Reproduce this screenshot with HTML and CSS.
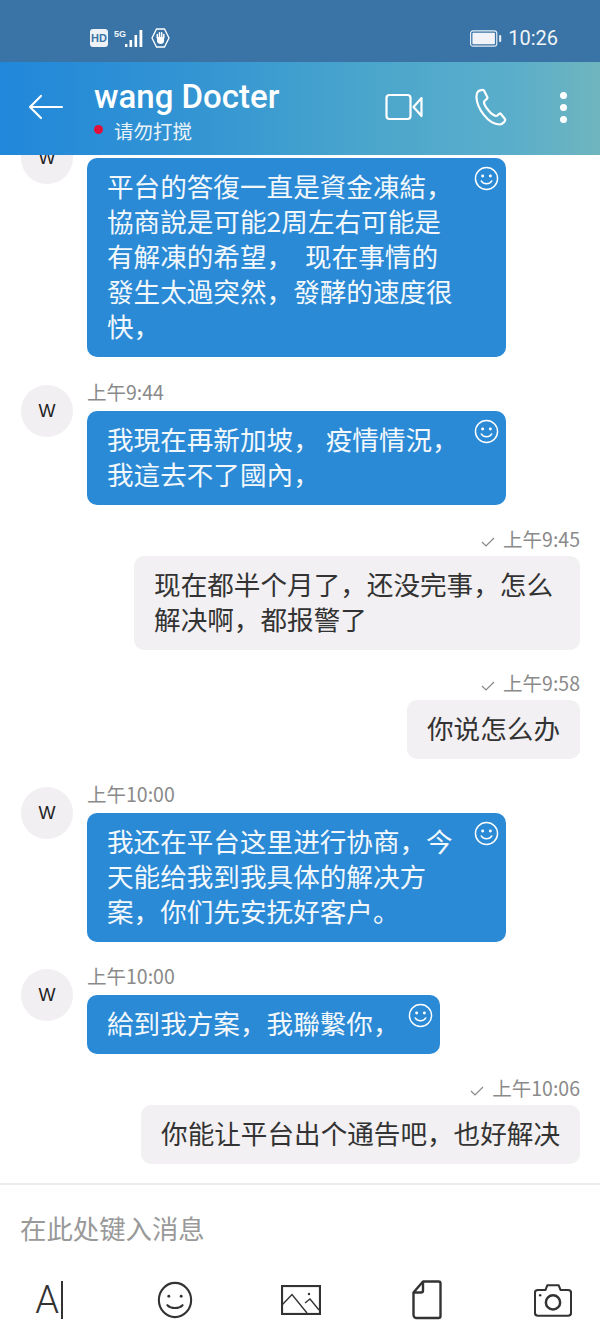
FILE: index.html
```html
<!DOCTYPE html>
<html lang="zh">
<head>
    <meta charset="UTF-8">
    <meta name="viewport" content="width=device-width, initial-scale=1.0">
    <title>wang Docter</title>
    <link rel="stylesheet" href="styles.css">
</head>
<body>
    <div class="container">
        <div class="status-bar">
            <div class="status-left">
                <span class="hd-badge">HD</span>
                <span class="signal">
                    <span class="signal-label">5G</span>
                    <svg width="19" height="19" viewBox="0 0 19 19" fill="#fff">
                        <rect x="0" y="15" width="2.400" height="3"></rect>
                        <rect x="4.500" y="11" width="2.600" height="7"></rect>
                        <rect x="9.500" y="6" width="2.600" height="12"></rect>
                        <rect x="14.500" y="1" width="2.800" height="17"></rect>
                    </svg>
                </span>
                <svg class="hand-icon" width="19" height="20" viewBox="0 0 19 20" fill="none" stroke="#fff" stroke-linecap="round">
                    <path d="M5.500 1h8L18 10l-4.500 9h-8L1 10z" stroke-width="1.300"></path>
                    <path d="M6.300 10V6.500M8.500 9.500V4.800M10.700 9.500V4.800M12.800 10V6.500" stroke-width="1.500"></path>
                    <path d="M6 9h7v4c0 1.800-1.400 3-3.300 3S6 14.800 6 13z" fill="#fff" stroke="none"></path>
                </svg>
            </div>
            <div class="status-right">
                <svg width="32" height="17" viewBox="0 0 33 17">
                    <rect x="0.600" y="0.600" width="27" height="15.800" rx="2.500" fill="none" stroke="#e6eef5" stroke-width="1.200"></rect>
                    <rect x="2.500" y="2.500" width="23.200" height="12" rx="1" fill="#f1f3f8"></rect>
                    <rect x="30" y="5" width="2.200" height="7" rx="1" fill="#e6eef5"></rect>
                </svg>
                <span class="clock">10:26</span>
            </div>
        </div>

        <div class="app-bar">
            <svg class="back-icon" width="36" height="26" viewBox="0 0 36 26" fill="none" stroke="#fff" stroke-width="2.200" stroke-linecap="round" stroke-linejoin="round">
                <path d="M2 13h32M13 2 2 13l11 11"></path>
            </svg>
            <div class="contact">
                <div class="contact-name">wang Docter</div>
                <div class="contact-status"><span class="red-dot"></span>请勿打搅</div>
            </div>
            <div class="app-actions">
                <svg width="38" height="28" viewBox="0 0 38 28" fill="none" stroke="#fff" stroke-width="2.200" stroke-linejoin="round">
                    <rect x="1.500" y="2" width="24" height="24" rx="3"></rect>
                    <path d="M36.500 5 28.500 14l8 9z"></path>
                </svg>
                <svg width="32" height="38" viewBox="0 0 32 38" fill="none" stroke="#fff" stroke-width="2.200" stroke-linejoin="round">
                    <path d="M3 3.500c2-1.500 5-2 6-1l3.500 7c.5 1.500-3.500 3-3.500 4.500 0 4 7.500 13.500 12 14 1.500.2 3-3 4.500-2.500l4.500 5.500c1 1.500-2 5.500-5.500 5.500C13 36.500 2 20 1.500 9.500 1.400 7 2 4.500 3 3.500z"></path>
                </svg>
                <div class="more-dots"><span></span><span></span><span></span></div>
            </div>
        </div>

        <div class="chat">
            <div class="msg msg-first">
                <div class="avatar">W</div>
                <div class="msg-body">
                    <div class="msg-time"></div>
                    <div class="bubble bubble-in bubble-wide">平台的答復一直是資金凍結&#xFF0C;<br>協商說是可能2周左右可能是<br>有解凍的希望&#xFF0C;&nbsp;&nbsp;现在事情的<br>發生太過突然&#xFF0C;發酵的速度很<br>快&#xFF0C;<svg class="bubble-smile" viewBox="0 0 26 26" fill="none" stroke="#fff" stroke-width="1.500" stroke-linecap="round"><circle cx="13" cy="13" r="11.500"></circle><circle cx="9" cy="10.500" r=".8" fill="#fff"></circle><circle cx="17" cy="10.500" r=".8" fill="#fff"></circle><path d="M7.500 15.500c2.500 4 8.500 4 11 0"></path></svg></div>
                </div>
            </div>

            <div class="msg msg-gap-a">
                <div class="avatar">W</div>
                <div class="msg-body">
                    <div class="msg-time">上午9:44</div>
                    <div class="bubble bubble-in bubble-wide">我現在再新加坡&#xFF0C;&nbsp;疫情情況&#xFF0C;<br>我這去不了國內&#xFF0C;<svg class="bubble-smile" viewBox="0 0 26 26" fill="none" stroke="#fff" stroke-width="1.500" stroke-linecap="round"><circle cx="13" cy="13" r="11.500"></circle><circle cx="9" cy="10.500" r=".8" fill="#fff"></circle><circle cx="17" cy="10.500" r=".8" fill="#fff"></circle><path d="M7.500 15.500c2.500 4 8.500 4 11 0"></path></svg></div>
                </div>
            </div>

            <div class="msg-out msg-gap-b">
                <div class="msg-time"><svg class="check" width="14" height="10" viewBox="0 0 14 10" fill="none" stroke="#888" stroke-width="1.200"><path d="M1 5l4 4 8-8"></path></svg>上午9:45</div>
                <div class="bubble bubble-out bubble-out-long">现在都半个月了&#xFF0C;还没完事&#xFF0C;怎么<br>解决啊&#xFF0C;都报警了</div>
            </div>

            <div class="msg-out msg-gap-c">
                <div class="msg-time"><svg class="check" width="14" height="10" viewBox="0 0 14 10" fill="none" stroke="#888" stroke-width="1.200"><path d="M1 5l4 4 8-8"></path></svg>上午9:58</div>
                <div class="bubble bubble-out">你说怎么办</div>
            </div>

            <div class="msg msg-gap-d">
                <div class="avatar">W</div>
                <div class="msg-body">
                    <div class="msg-time">上午10:00</div>
                    <div class="bubble bubble-in bubble-wide">我还在平台这里进行协商&#xFF0C;今<br>天能给我到我具体的解决方<br>案&#xFF0C;你们先安抚好客户。<svg class="bubble-smile" viewBox="0 0 26 26" fill="none" stroke="#fff" stroke-width="1.500" stroke-linecap="round"><circle cx="13" cy="13" r="11.500"></circle><circle cx="9" cy="10.500" r=".8" fill="#fff"></circle><circle cx="17" cy="10.500" r=".8" fill="#fff"></circle><path d="M7.500 15.500c2.500 4 8.500 4 11 0"></path></svg></div>
                </div>
            </div>

            <div class="msg msg-gap-e">
                <div class="avatar">W</div>
                <div class="msg-body">
                    <div class="msg-time">上午10:00</div>
                    <div class="bubble bubble-in bubble-short">給到我方案&#xFF0C;我聯繫你&#xFF0C;<svg class="bubble-smile" viewBox="0 0 26 26" fill="none" stroke="#fff" stroke-width="1.500" stroke-linecap="round"><circle cx="13" cy="13" r="11.500"></circle><circle cx="9" cy="10.500" r=".8" fill="#fff"></circle><circle cx="17" cy="10.500" r=".8" fill="#fff"></circle><path d="M7.500 15.500c2.500 4 8.500 4 11 0"></path></svg></div>
                </div>
            </div>

            <div class="msg-out msg-gap-f">
                <div class="msg-time"><svg class="check" width="14" height="10" viewBox="0 0 14 10" fill="none" stroke="#888" stroke-width="1.200"><path d="M1 5l4 4 8-8"></path></svg>上午10:06</div>
                <div class="bubble bubble-out">你能让平台出个通告吧&#xFF0C;也好解决</div>
            </div>
        </div>

        <div class="composer">
            <div class="composer-input">在此处键入消息</div>
            <div class="composer-tools">
                <div class="tool-text">A<span class="caret"></span></div>
                <svg width="38" height="40" viewBox="0 0 40 40" fill="none" stroke="#333" stroke-width="2.200" stroke-linecap="round">
                    <ellipse cx="20" cy="20" rx="17" ry="18"></ellipse>
                    <circle cx="13.500" cy="16" r="1.500" fill="#333" stroke="none"></circle>
                    <circle cx="26.500" cy="16" r="1.500" fill="#333" stroke="none"></circle>
                    <path d="M12 25.500c4 4 12 4 16 0"></path>
                </svg>
                <svg width="40" height="30" viewBox="0 0 40 30" fill="none" stroke="#333">
                    <rect x="1" y="1" width="38" height="28" stroke-width="2.200"></rect>
                    <path d="M1 20 11 9.500 26 28M24 18l5-4 9 11" stroke-width="1.400"></path>
                    <circle cx="28" cy="9" r="1.200" fill="#333" stroke="none"></circle>
                </svg>
                <svg width="30" height="40" viewBox="0 0 30 40" fill="none" stroke="#333" stroke-width="2.400" stroke-linejoin="round">
                    <path d="M11 1.500h15.500a2 2 0 0 1 2 2V36a2 2 0 0 1-2 2h-22a3 3 0 0 1-3-3V12.500z"></path>
                    <path d="M11 1.500v9a2 2 0 0 1-2 2H1.500"></path>
                </svg>
                <svg width="38" height="35" viewBox="0 0 40 36" fill="none" stroke="#333" stroke-width="2.200" stroke-linejoin="round">
                    <path d="M4 7h8l2-5h12l2 5h8a3 3 0 0 1 3 3v21a3 3 0 0 1-3 3H4a3 3 0 0 1-3-3V10a3 3 0 0 1 3-3z"></path>
                    <circle cx="20" cy="20" r="7.500" stroke-width="2.600"></circle>
                    <circle cx="6.500" cy="12.500" r="1.300" fill="#333" stroke="none"></circle>
                </svg>
            </div>
        </div>
    </div>
</body>
</html>
```

FILE: styles.css
```css
body, html {
    margin: 0;
    padding: 0;
    height: 100%;
    font-family: "Noto Sans CJK SC", "Noto Sans", sans-serif;
    overflow: hidden;
}
.container {
    display: flex;
    flex-direction: column;
    width: 600px;
    height: 1333px;
    background-color: #ffffff;
    overflow: hidden;
}

/* status bar */
.status-bar {
    flex: none;
    display: flex;
    align-items: center;
    justify-content: space-between;
    box-sizing: border-box;
    height: 62px;
    padding: 14px 42px 0 90px;
    background-color: #3a74a6;
    color: #f1f4f8;
}
.status-left, .status-right {
    display: flex;
    align-items: center;
}
.hd-badge {
    width: 18px;
    height: 18px;
    border-radius: 3px;
    background-color: #eef2f6;
    color: #3a74a6;
    font-family: "Liberation Sans", sans-serif;
    font-size: 11px;
    font-weight: bold;
    line-height: 18px;
    text-align: center;
}
.signal {
    display: flex;
    align-items: flex-end;
    margin-left: 6px;
    height: 19px;
}
.signal-label {
    align-self: flex-start;
    margin-right: -1px;
    font-family: "Liberation Sans", sans-serif;
    font-size: 9px;
    font-weight: bold;
    line-height: 10px;
}
.hand-icon {
    margin-left: 7px;
}
.clock {
    margin-left: 6px;
    font-family: Roboto, sans-serif;
    font-size: 20px;
    line-height: 24px;
}

/* app bar */
.app-bar {
    flex: none;
    display: flex;
    align-items: center;
    box-sizing: border-box;
    height: 93px;
    padding: 0 33px 0 28px;
    background: linear-gradient(90deg, #2187da 0%, #3596d2 35%, #4ba6cc 62%, #5aaecb 85%, #6fb5be 100%);
    color: #ffffff;
}
.back-icon {
    flex: none;
    margin-top: -4px;
}
.contact {
    flex: 1;
    margin-left: 30px;
    padding-top: 5px;
}
.contact-name {
    font-family: Roboto, sans-serif;
    font-size: 33px;
    font-weight: 500;
    line-height: 38px;
}
.contact-status {
    display: flex;
    align-items: center;
    margin-top: 1px;
    font-size: 19.500px;
    line-height: 28px;
    color: #e8f2f8;
}
.red-dot {
    width: 9px;
    height: 9px;
    margin: -3px 11px 0 0;
    border-radius: 50%;
    background-color: #e0103a;
}
.app-actions {
    display: flex;
    align-items: center;
    margin-top: -3px;
}
.app-actions svg + svg {
    margin-left: 52px;
}
.more-dots {
    display: flex;
    flex-direction: column;
    gap: 5px;
    margin-left: 53px;
}
.more-dots span {
    width: 7px;
    height: 7px;
    border-radius: 50%;
    background-color: #ffffff;
}

/* chat */
.chat {
    flex: 1;
    min-height: 0;
    overflow: hidden;
}
.msg {
    display: flex;
    align-items: flex-start;
    padding-left: 21px;
}
.msg-first {
    margin-top: -23px;
}
.msg-gap-a { margin-top: 28px; }
.msg-gap-b { margin-top: 21px; }
.msg-gap-c { margin-top: 20px; }
.msg-gap-d { margin-top: 28px; }
.msg-gap-e { margin-top: 27px; }
.msg-gap-f { margin-top: 21px; }
.avatar {
    flex: none;
    width: 52px;
    height: 52px;
    border-radius: 50%;
    background-color: #f1eff1;
    color: #222222;
    font-family: "Liberation Sans", sans-serif;
    font-size: 18px;
    line-height: 52px;
    text-align: center;
}
.msg-body {
    margin-left: 14px;
    margin-top: -6px;
}
.msg-body .msg-time {
    margin-bottom: 6px;
}
.msg-time {
    height: 26px;
    margin-bottom: 4px;
    font-size: 19.500px;
    line-height: 26px;
    color: #8a8a8a;
}
.msg-out {
    display: flex;
    flex-direction: column;
    align-items: flex-end;
    padding-right: 20px;
}
.check {
    margin-right: 8px;
}
.bubble {
    position: relative;
    box-sizing: border-box;
    padding: 10px 20px 14px;
    border-radius: 10px;
    font-size: 26.600px;
    line-height: 35px;
    white-space: nowrap;
}
.bubble-in {
    background-color: #2a8ad6;
    color: #f2f8fc;
}
.bubble-wide {
    width: 419px;
}
.bubble-short {
    width: 353px;
}
.bubble-out {
    background-color: #f2f0f2;
    color: #333333;
}
.bubble-out-long {
    padding-right: 27px;
}
.bubble-smile {
    position: absolute;
    top: 8px;
    right: 7px;
    width: 25px;
    height: 25px;
}

/* composer */
.composer {
    flex: none;
    box-sizing: border-box;
    height: 150px;
    border-top: 2px solid #ececec;
}
.composer-input {
    padding: 24px 0 0 20px;
    font-size: 26.400px;
    line-height: 38px;
    color: #999999;
}
.composer-tools {
    display: grid;
    grid-template-columns: repeat(5, 126px);
    justify-items: center;
    align-items: center;
    height: 42px;
    margin: 32px 0 0 -14px;
}
.tool-text {
    display: flex;
    align-items: center;
    font-family: Roboto, sans-serif;
    font-size: 38px;
    font-weight: 300;
    line-height: 40px;
    color: #333333;
}
.caret {
    width: 2px;
    height: 38px;
    margin-left: 2px;
    background-color: #333333;
}
```
